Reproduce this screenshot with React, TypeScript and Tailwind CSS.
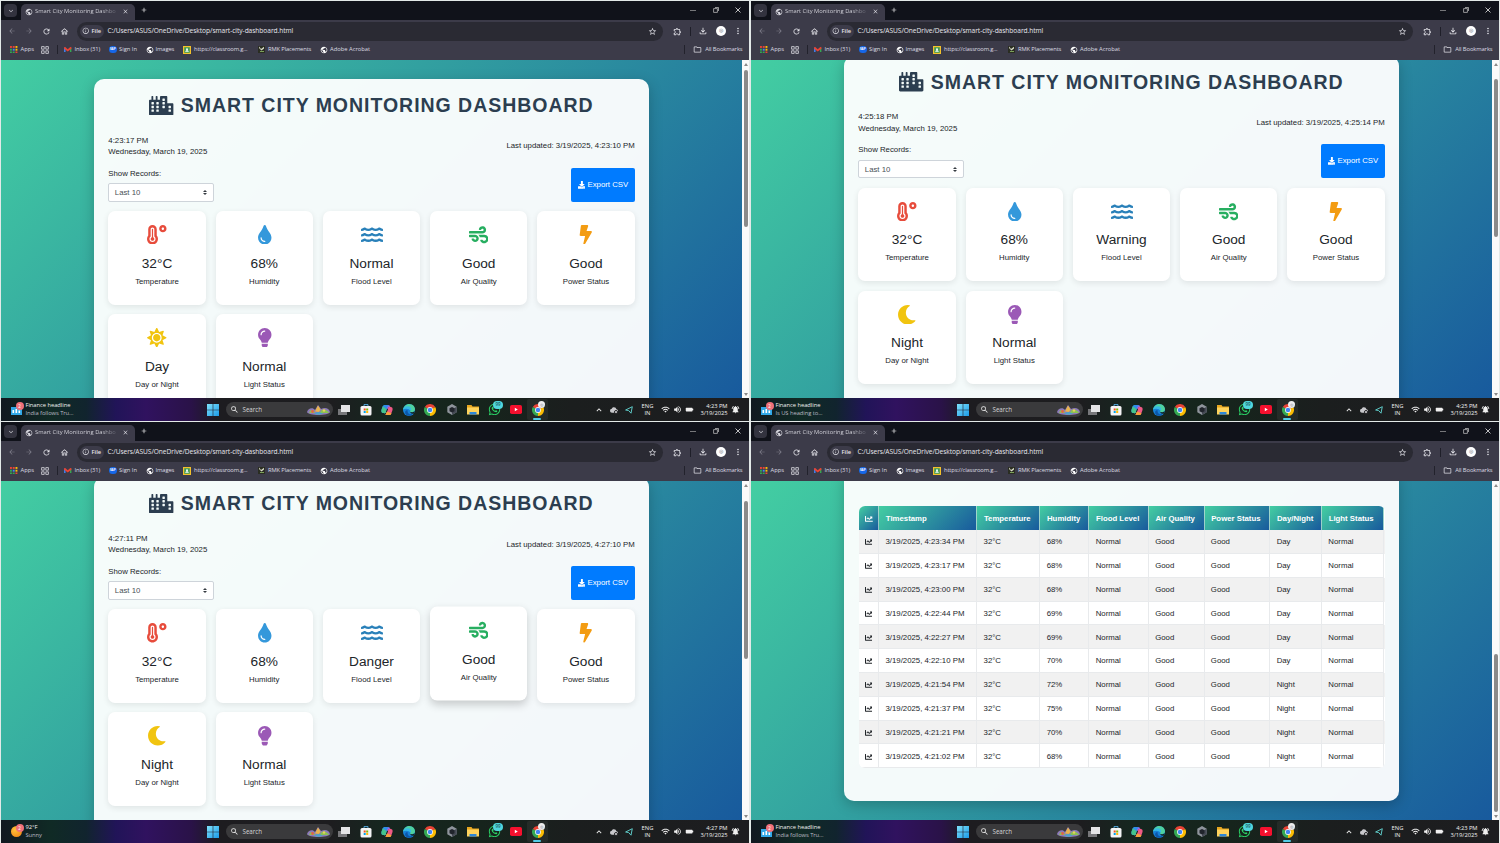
import type { ReactNode } from 'react';
import {
  FaBolt, FaChartLine, FaCity, FaDownload, FaLightbulb, FaMoon, FaSun,
  FaTemperatureHigh, FaTint, FaWater, FaWhatsapp, FaWind,
} from 'react-icons/fa';
import {
  MdArrowBack, MdArrowForward, MdClose, MdExpandMore, MdMoreVert, MdOutlineExtension, MdOutlineFileDownload,
  MdOutlineFolder, MdOutlineHome, MdPublic, MdRefresh, MdSearch, MdStarOutline, MdAdd, MdInfoOutline,
  MdKeyboardArrowUp, MdWifi, MdVolumeUp, MdBatteryFull, MdCloud, MdNotificationsActive,
} from 'react-icons/md';

type City = {
  clock: string;
  updated: string;
  flood: string;
  night: boolean;
  hover?: boolean;
};

const rows = [
  ['4:23:34', '68%', 'Day'],
  ['4:23:17', '68%', 'Day'],
  ['4:23:00', '68%', 'Day'],
  ['4:22:44', '69%', 'Day'],
  ['4:22:27', '69%', 'Day'],
  ['4:22:10', '70%', 'Day'],
  ['4:21:54', '72%', 'Night'],
  ['4:21:37', '75%', 'Night'],
  ['4:21:21', '70%', 'Night'],
  ['4:21:02', '68%', 'Night'],
];

const tableGrid =
  'grid grid-cols-[20.8px_98.1px_63.1px_49px_59.5px_55.7px_65.8px_51.7px_62.3px]';

function Chrome({ className = 'size-3' }: { className?: string }) {
  return (
    <svg viewBox="0 0 24 24" className={className}>
      <path d="M12 12 1.6 6A12 12 0 0 1 22.4 6Z" fill="#ea4335" />
      <path d="M12 12 22.4 6A12 12 0 0 1 12 24Z" fill="#fbbc04" />
      <path d="M12 12v12A12 12 0 0 1 1.6 6Z" fill="#34a853" />
      <circle cx="12" cy="12" r="5.8" fill="#fff" />
      <circle cx="12" cy="12" r="4.5" fill="#4285f4" />
    </svg>
  );
}

function TabBar() {
  return (
    <div className="flex h-[19px] shrink-0 items-end bg-[#10121a] text-[#d5d5dc]">
      <div className="mb-[3px] ml-[3px] flex h-[13px] w-[13px] items-center justify-center rounded-[4px] bg-[#33333f]">
        <MdExpandMore className="size-[8px]" />
      </div>
      <div className="ml-[3.500px] flex h-4 w-[114px] items-center rounded-t-[5px] bg-[#3c3b49] pb-[1px] pl-[4px] pr-[5.500px]">
        <MdPublic className="size-[8px] shrink-0" />
        <span className="ml-[2.500px] whitespace-nowrap bg-[linear-gradient(to_right,#dcdce3_82%,#5a5967)] bg-clip-text text-[5.800px] tracking-[-0.020px] text-transparent">
          Smart City Monitoring Dashbo
        </span>
        <MdClose className="ml-auto size-[7px] shrink-0" />
      </div>
      <MdAdd className="mb-[6px] ml-[5px] size-[8px] text-white" />
      <div className="mb-[7px] ml-auto mr-[8px] flex items-center gap-[16.300px]">
        <svg viewBox="0 0 6 6" className="size-[6px]" fill="none" stroke="#bbb" strokeWidth=".6"><path d="M0 3.5h6" /></svg>
        <svg viewBox="0 0 6 6" className="size-[6px]" fill="none" stroke="#ccc" strokeWidth=".7"><path d="M.6 1.6h3.8v3.8H.6zM2 .5h3.5V4" /></svg>
        <svg viewBox="0 0 6 6" className="size-[6px]" fill="none" stroke="#eee" strokeWidth=".8"><path d="m.5.5 5 5m0-5-5 5" /></svg>
      </div>
    </div>
  );
}

function AddressBar() {
  return (
    <div className="flex h-[22px] shrink-0 items-center bg-[#3c3b49] text-[#e6e6ec]">
      <MdArrowBack className="ml-[7px] size-[8px] text-[#7c7b88]" />
      <MdArrowForward className="ml-[9px] size-[8px] text-[#7c7b88]" />
      <MdRefresh className="ml-[9px] size-[9px]" />
      <MdOutlineHome className="ml-[8.500px] size-[9px]" />
      <div className="ml-[8.500px] flex h-[19px] w-[586px] items-center rounded-full bg-[#2a2a33] pl-[3px] pr-[6px]">
        <div className="flex h-[13px] w-[24px] items-center rounded-full bg-[#3c3b49] pl-[2px] text-[5.800px] font-semibold">
          <MdInfoOutline className="mr-[2px] size-[7.500px]" />
          File
        </div>
        <span className="ml-[3.500px] text-[6.600px] tracking-[-0.040px] text-[#e8e8ee]">C:/Users/ASUS/OneDrive/Desktop/smart-city-dashboard.html</span>
        <MdStarOutline className="ml-auto size-[9px]" />
      </div>
      <MdOutlineExtension className="ml-[10px] size-[9px]" />
      <span className="ml-[8px] h-[9px] w-px bg-[#1f1f29]" />
      <MdOutlineFileDownload className="ml-[7px] size-[10px]" />
      <span className="ml-[7.500px] flex size-[10px] items-center justify-center rounded-full bg-white text-[5px] text-gray-500">◎</span>
      <MdMoreVert className="ml-[7.500px] size-[10px]" />
    </div>
  );
}

function Bookmark({ className, icon, children }: { className: string; icon: ReactNode; children?: ReactNode }) {
  return (
    <div className={`flex shrink-0 items-center whitespace-nowrap ${className}`}>
      {icon}
      {children}
    </div>
  );
}

const squares = [0, 1, 2, 3, 4, 5, 6, 7, 8];
const squareColors = ['#ea4335', '#ea4335', '#fbbc04', '#34a853', '#4285f4', '#fbbc04', '#34a853', '#34a853', '#ea4335'];

function Bookmarks() {
  return (
    <div className="flex h-[18px] shrink-0 items-center bg-[#3c3b49] pb-[3px] pl-[9px] text-[5.800px] text-[#dcdce3]">
      <Bookmark
        className="w-[31px] gap-[3px]"
        icon={
          <svg viewBox="0 0 9 9" className="size-[7.500px]">
            {squares.map((i) => (
              <rect key={i} x={(i % 3) * 3.3} y={Math.floor(i / 3) * 3.3} width="2.3" height="2.3" fill={squareColors[i]} />
            ))}
          </svg>
        }
      >
        Apps
      </Bookmark>
      <Bookmark
        className="w-[15.500px]"
        icon={
          <svg viewBox="0 0 8 8" className="size-[8px]" fill="none" stroke="#c8c8d0" strokeWidth=".9">
            <path d="M.6.6h2.6v2.6H.6zM4.8.6h2.6v2.6H4.8zM.6 4.8h2.6v2.6H.6zM4.800 4.800h2.600v2.600H4.800z" />
          </svg>
        }
      />
      <Bookmark className="w-[7.500px]" icon={<span className="h-[9px] w-px bg-[#22222c]" />} />
      <Bookmark
        className="w-[45px] gap-[3px]"
        icon={
          <svg viewBox="0 0 8 6" className="h-[5.500px] w-[7.500px]">
            <path d="M0 6V.8h1.6V6z" fill="#4285f4" />
            <path d="M6.4 6V.8H8V6z" fill="#34a853" />
            <path d="M0 .4 1.2 0 4 2.4 6.8 0 8 .4V2L4 5 0 2z" fill="#ea4335" />
          </svg>
        }
      >
        <span className="tracking-[-0.130px]">Inbox (31)</span>
      </Bookmark>
      <Bookmark
        className="w-[36.500px] gap-[2.500px]"
        icon={<span className="flex h-[7.500px] w-[7.500px] items-center justify-center rounded-full bg-[#1667e8] text-[3px] font-bold text-white">SAP</span>}
      >
        Sign In
      </Bookmark>
      <Bookmark className="w-[37px] gap-[2px]" icon={<MdPublic className="size-[8px] text-white" />}>
        <span className="tracking-[-0.100px]">Images</span>
      </Bookmark>
      <Bookmark
        className="w-[75.500px] gap-[3.500px]"
        icon={
          <svg viewBox="0 0 8 8" className="size-[8px]">
            <path d="M0 0h8v8H0z" fill="#f4c22b" />
            <path d="M1.200 1.200h5.600v5.600H1.200z" fill="#3f9b55" />
            <circle cx="4" cy="3.2" r="1" fill="#fff" />
            <path d="M2.2 5.8c0-2 3.6-2 3.6 0z" fill="#fff" />
          </svg>
        }
      >
        <span className="tracking-[-0.150px]">https://classroom.g...</span>
      </Bookmark>
      <Bookmark
        className="w-[62px] gap-[3px]"
        icon={
          <svg viewBox="0 0 7 7" className="size-[7px]">
            <path d="M0 0h7v7H0z" fill="#2a2d22" />
            <path d="M1 .5 3 3 6 .8v1.6L3.5 4.5 1 2z" fill="#d9dcc8" />
            <path d="M2 5h4v1H2z" fill="#7ca05a" />
          </svg>
        }
      >
        <span className="tracking-[-0.130px]">RMK Placements</span>
      </Bookmark>
      <Bookmark className="w-[60px] gap-[2px]" icon={<MdPublic className="size-[8px] text-white" />}>Adobe Acrobat</Bookmark>
      <div className="ml-auto mr-[6.500px] flex items-center">
        <span className="mr-[8px] h-[9px] w-px bg-[#22222c]" />
        <MdOutlineFolder className="mr-[3px] size-[9px]" />
        <span className="tracking-[-0.100px]">All Bookmarks</span>
      </div>
    </div>
  );
}

function Taskbar({ lines, time, sunny }: { lines: [string, string]; time: string; sunny?: boolean }) {
  return (
    <div className="flex h-[23px] shrink-0 items-center bg-[linear-gradient(to_right,#111820_0px,#102a25_50px,#11242e_85px,#211458_115px,#30125f_145px,#2a1248_190px,#1d1c20_216px,#1d1d1f_330px,#16261f_380px,#16241c_480px,#1b1e1e_570px,#1d1d20_748px)] text-[5.800px] leading-[7px] text-[#f0f0f0]">
      <div className="relative ml-[9.500px] size-[11px]">
        {sunny ? (
          <span className="block size-[11px] rounded-full bg-[radial-gradient(circle_at_35%_35%,#ffc03a,#ef7d10)]" />
        ) : (
          <svg viewBox="0 0 11 11" className="size-[11px]">
            <path d="M0 3h11v8H0z" fill="#31a8e8" />
            <path d="M1.500 9V6h1.600v3zM4.500 9V5h1.600v4zM7.500 9V6.500h1.600V9z" fill="#fff" />
          </svg>
        )}
        <span className="absolute -top-[2px] left-[5px] flex size-[8px] items-center justify-center rounded-full bg-[#f0707a] text-[4.500px] text-white">2</span>
      </div>
      <div className="ml-[4px] w-[170px] pt-[1px] leading-[7.600px]">
        <div className="tracking-[-0.050px]">{lines[0]}</div>
        <div className="tracking-[-0.060px] text-[#b9b9c2]">{lines[1]}</div>
      </div>
      <svg viewBox="0 0 12 12" className="ml-[11px] size-[12px]">
        <defs>
          <linearGradient id="win" x1="0" y1="0" x2="12" y2="12" gradientUnits="userSpaceOnUse">
            <stop stopColor="#7fe0fb" />
            <stop offset="1" stopColor="#1b9be8" />
          </linearGradient>
        </defs>
        <path d="M0 0h5.700v5.700H0zM6.300 0H12v5.700H6.300zM0 6.300h5.700V12H0zM6.300 6.300H12V12H6.300z" fill="url(#win)" />
      </svg>
      <div className="ml-[7px] flex h-[15.500px] w-[107px] items-center rounded-full bg-[#3a3a3c] pl-[4px] pr-[3px]">
        <MdSearch className="size-[9px]" />
        <span className="ml-[4px] text-[6.200px] text-[#d5d5d5]">Search</span>
        <svg viewBox="0 0 23 12" className="ml-auto h-[12px] w-[23px]">
          <path d="M0 8C1 4 6 3 8 6l3-5 3 4c4-2 8-1 9 3-1 4-22 4-23 0z" fill="#8d7bb8" />
          <path d="M2 9c1-4 5-4 6 0zM13 9c1-5 7-4 9 0z" fill="#8cc152" />
          <path d="M8 7.500 11 1.500l2.500 4L12 8z" fill="#e9b44c" />
          <circle cx="5.500" cy="7.500" r="1.400" fill="#e0604a" />
          <circle cx="17" cy="6.500" r="1.300" fill="#e8d05a" />
          <path d="M7 9.500c3-2 6-2 9 0-3 1.500-6 1.500-9 0z" fill="#4aa3c7" />
        </svg>
      </div>
      <div className="ml-[0.800px] flex items-center">
        <div className="flex w-[21.500px] justify-center">
          <svg viewBox="0 0 12 10" className="h-[10px] w-[12px]">
            <path d="M0 4h9v6H0z" fill="#77777a" />
            <path d="M3 0h9v7H3z" fill="#e4e4e6" />
          </svg>
        </div>
        <div className="flex w-[21.500px] justify-center">
          <svg viewBox="0 0 12 12" className="size-[12px]">
            <path d="M4 2.500V.6h4v1.900" fill="none" stroke="#5ab5ee" strokeWidth=".9" />
            <rect x=".5" y="2" width="11" height="9.500" rx="1.500" fill="#f4f4f6" />
            <path d="M3.700 4.500h2v2h-2z" fill="#f25022" />
            <path d="M6.200 4.500h2v2h-2z" fill="#7fba00" />
            <path d="M3.700 7h2v2h-2z" fill="#00a4ef" />
            <path d="M6.200 7h2v2h-2z" fill="#ffb900" />
          </svg>
        </div>
        <div className="flex w-[21.500px] justify-center">
          <svg viewBox="0 0 12 12" className="size-[12px]">
            <path d="M3.500 1h4L5 8.200C4.600 9.300 3.500 9.300 2 9 0 8.500.2 6.800.7 5.200L1.800 2.200C2.200 1.300 2.800 1 3.500 1z" fill="#2f8fe8" />
            <path d="M.7 5.200 1.800 2.200 5.900 5.500 5 8.200C4.600 9.300 3.500 9.300 2 9 0 8.500.2 6.800.7 5.200z" fill="#45c58c" />
            <path d="M8.500 11h-4L7 3.800C7.400 2.700 8.500 2.700 10 3c2 .5 1.800 2.200 1.300 3.800l-1.100 3c-.4.900-1 1.200-1.700 1.200z" fill="#ef5a86" />
            <path d="M8.500 11h-4l1.300-3.800 4.700 2c-.5 1.300-1.200 1.800-2 1.800z" fill="#f6a13c" />
            <path d="M7.500 1C8.500 1 8.700 2 9 2.900 7.800 2.800 7.300 3 7 3.800L6.400 5.500 5.500 4z" fill="#8a6cf0" />
            <path d="M6.600 4.900 5.400 8.200" stroke="#16261f" strokeWidth="1" />
          </svg>
        </div>
        <div className="flex w-[21.500px] justify-center">
          <svg viewBox="0 0 12 12" className="size-[12px]">
            <circle cx="6" cy="6" r="6" fill="#1681d8" />
            <path d="M.1 5.500C1 1.500 4 0 6.300 0 10 0 12 3 12 5.200c0 2-1.500 3-3.300 3-1.700 0-2-.6-1.500-1.300C8.200 5 6.500 3.700 4.700 3.700 2.500 3.700.8 4.600.1 5.500z" fill="#4fd1a0" />
            <path d="M.1 5.500C.9 3 3.500 1.800 6 2.500 8.300 3.200 8.800 5.500 7.300 6.800 6.500 5 3 4 .1 5.500z" fill="#35b9e6" />
            <path d="M7.300 6.800c-.5.700-.2 1.400 1.400 1.400 1.300 0 2.300-.4 2.900-1.300L11 9.600c-3 .8-4.200-1-3.700-2.800z" fill="#16261f" />
            <path d="M4.600 6C4 8.500 6 11 9.500 10.200 7.500 12.500 3.500 12 2.300 9.400 1.600 7.600 2.800 6.300 4.600 6z" fill="#0d57a8" />
          </svg>
        </div>
        <div className="flex w-[21.500px] justify-center"><Chrome /></div>
        <div className="flex w-[21.500px] justify-center">
          <svg viewBox="0 0 10 11" className="h-[11px] w-[10px]">
            <path d="M5 0 9.700 2.800v5.400L5 11 .3 8.200V2.800z" fill="#8f949c" />
            <path d="M5 5.500 9.700 2.800v5.400L5 11z" fill="#454a54" />
            <path d="M5 3 7.500 4.300v2.900L5 8.500 2.500 7.200V4.300z" fill="#20242b" />
          </svg>
        </div>
        <div className="flex w-[21.500px] justify-center">
          <svg viewBox="0 0 12 11" className="h-[11px] w-[12px]">
            <path d="M0 1h4.500l1 1.400H12V10H0z" fill="#e8a61e" />
            <path d="M0 3.500h12V10.500H0z" fill="#ffd35c" />
            <path d="M2.500 8h7v2.500h-7z" fill="#2f87d6" />
          </svg>
        </div>
        <div className="relative flex w-[21.500px] justify-center">
          <FaWhatsapp className="size-[13px] text-[#2bd467]" />
          <span className="absolute -top-[2px] left-[9.500px] flex h-[7.500px] w-[9.500px] items-center justify-center rounded-full bg-[#4fd6dd] text-[4.500px] text-[#113333]">99</span>
        </div>
        <div className="flex w-[21.500px] justify-center">
          <svg viewBox="0 0 12 9" className="h-[9px] w-[12px]">
            <rect width="12" height="9" rx="1.800" fill="#f5102e" />
            <path d="m4.800 2.700 3 1.800-3 1.800z" fill="#fff" />
          </svg>
        </div>
        <div className="relative flex h-[21px] w-[21.500px] items-center justify-center rounded-[2px] bg-white/5">
          <Chrome />
          <span className="absolute left-[11px] top-[2px] flex size-[7px] items-center justify-center rounded-full bg-[#eeeeee] text-[4px] text-gray-500">◎</span>
          <span className="absolute bottom-0 left-[6.500px] h-[2px] w-[8px] rounded-full bg-[#52cbe6]" />
        </div>
      </div>
      <div className="ml-auto flex items-center">
        <MdKeyboardArrowUp className="size-[10px]" />
        <div className="relative ml-[6px]">
          <MdCloud className="size-[8px] text-[#c8c8cc]" />
          <span className="absolute bottom-0 right-0 size-[4px] rounded-full border border-[#1d1d20] bg-[#e8e8ea]" />
        </div>
        <svg viewBox="0 0 8 8" className="ml-[7px] size-[8px]" fill="none" stroke="#5ec9c6" strokeWidth="1">
          <path d="M.6 4 7.300.7 6 7.200 3.700 4.600z" />
        </svg>
        <div className="ml-[6.500px] w-[17px] text-center">
          <div>ENG</div>
          <div>IN</div>
        </div>
        <MdWifi className="ml-[5px] size-[9px]" />
        <MdVolumeUp className="ml-[3px] size-[9px]" />
        <MdBatteryFull className="ml-[2.500px] size-[9px] rotate-90" />
        <div className="ml-[4px] w-[30px] whitespace-nowrap text-right tracking-[-0.050px]">
          <div>{time}</div>
          <div>3/19/2025</div>
        </div>
        <MdNotificationsActive className="ml-[3.500px] mr-[9px] size-[9px]" />
      </div>
    </div>
  );
}

function Window({ children, thumb, taskbar }: { children: ReactNode; thumb: string; taskbar: ReactNode }) {
  return (
    <section className="flex h-full flex-col overflow-hidden">
      <div className="flex flex-col font-['Open_Sans','Noto_Sans',sans-serif]">
        <TabBar />
        <AddressBar />
        <Bookmarks />
      </div>
      <div className="flex min-h-0 flex-1">
        <div className="min-w-0 flex-1 overflow-hidden bg-[linear-gradient(135deg,#43cea2,#185a9d)] pl-[93px]">{children}</div>
        <div className="flex w-[7px] shrink-0 flex-col items-center bg-[#fafafa]">
          <span className="mt-[2.500px] border-x-[2px] border-b-[3px] border-x-transparent border-b-[#8a8a8a]" />
          <span className={`w-[4px] rounded-full bg-[#8a8a8a] ${thumb}`} />
          <span className="mb-[2px] mt-auto border-x-[2px] border-t-[3px] border-x-transparent border-t-[#8a8a8a]" />
        </div>
      </div>
      <div className="font-['Open_Sans','Noto_Sans',sans-serif]">{taskbar}</div>
    </section>
  );
}

function StatCard({ icon, value, label, raised }: { icon: ReactNode; value: string; label: string; raised?: boolean }) {
  return (
    <div
      className={`flex h-[93.300px] flex-col items-center rounded-[7px] bg-white pt-[13.700px] ${
        raised ? '-translate-y-[2.400px] shadow-[0_4px_8px_rgba(0,0,0,0.18)]' : 'shadow-[0_2px_6px_rgba(0,0,0,0.09)]'
      }`}
    >
      <div className="text-[19.530px]">{icon}</div>
      <h3 className="mt-[11.300px] text-[13.670px] leading-[16.400px]">{value}</h3>
      <p className="mt-[3.600px] leading-[11.720px]">{label}</p>
    </div>
  );
}

function Dashboard({ clock, updated, flood, night, hover, offset }: City & { offset: string }) {
  return (
    <div className={`h-[600px] w-[555px] rounded-[10px] bg-white/95 px-[14.300px] pt-[14.650px] text-[7.810px] leading-[11.720px] text-[#212529] shadow-[0_4px_14px_rgba(0,0,0,0.22)] ${offset}`}>
      <h1 className="flex h-[23.400px] items-center justify-center whitespace-nowrap text-[19.530px] font-bold tracking-[0.960px] text-[#2c3e50]">
        <FaCity className="mr-[7px] h-[19.500px] w-[24.400px]" />
        <span className="pt-[1.600px]">SMART CITY MONITORING DASHBOARD</span>
      </h1>
      <div className="mt-[17.500px] flex items-center justify-between">
        <div>
          <div>{clock}</div>
          <div>Wednesday, March 19, 2025</div>
        </div>
        <div>Last updated: {updated}</div>
      </div>
      <div className="mt-[9.800px] flex justify-between">
        <div>
          <div>Show Records:</div>
          <div className="mt-[3.500px] flex h-[18.550px] w-[105.500px] items-center justify-between rounded-[2px] border-[0.500px] border-[#ced4da] bg-white pl-[5.500px] pr-[5.500px] pt-[1px] text-[#495057]">
            Last 10
            <svg viewBox="0 0 4 5" className="h-[5px] w-[4px]"><path d="M0 2 2 0l2 2zM0 3h4L2 5z" fill="#343a40" /></svg>
          </div>
        </div>
        <button className="flex w-[63.500px] items-center justify-center rounded-[2px] bg-[#007bff] text-white">
          <FaDownload className="mr-[2px] size-[7.810px]" />
          Export CSV
        </button>
      </div>
      <div className="mt-[9.700px] grid grid-cols-5 gap-[9.770px]">
        <StatCard icon={<FaTemperatureHigh className="text-[#e74c3c]" />} value="32°C" label="Temperature" />
        <StatCard icon={<FaTint className="text-[#3498db]" />} value="68%" label="Humidity" />
        <StatCard icon={<FaWater className="h-[19.500px] w-[24px] text-[#2980b9]" />} value={flood} label="Flood Level" />
        <StatCard icon={<FaWind className="text-[#27ae60]" />} value="Good" label="Air Quality" raised={hover} />
        <StatCard icon={<FaBolt className="text-[#f39c12]" />} value="Good" label="Power Status" />
        <StatCard
          icon={night ? <FaMoon className="text-[#f1c40f]" /> : <FaSun className="text-[#f1c40f]" />}
          value={night ? 'Night' : 'Day'}
          label="Day or Night"
        />
        <StatCard icon={<FaLightbulb className="text-[#9b59b6]" />} value="Normal" label="Light Status" />
      </div>
    </div>
  );
}

const headCell = 'flex items-center border-r-[0.500px] border-[#dee2e6]/60 bg-[linear-gradient(135deg,#43cea2,#185a9d)] pl-[6.500px] pt-[1px]';
const bodyCell = 'flex items-center border-b border-r border-[#e8eaec] pl-[6.200px] pt-[1.500px]';

function Records() {
  return (
    <div className="-mt-[10px] h-[329.500px] w-[555px] rounded-[10px] bg-white/95 px-[14.500px] pt-[35px] text-[7.810px] text-[#212529] shadow-[0_4px_14px_rgba(0,0,0,0.22)]">
      <div className="overflow-hidden rounded-[6px] bg-white">
        <div className={`${tableGrid} h-[24.200px] whitespace-nowrap font-bold text-white`}>
          <div className={headCell}><FaChartLine className="size-[7.810px]" /></div>
          {['Timestamp', 'Temperature', 'Humidity', 'Flood Level', 'Air Quality', 'Power Status', 'Day/Night', 'Light Status'].map((h) => (
            <div key={h} className={headCell}>{h}</div>
          ))}
        </div>
        {rows.map(([time, humidity, phase]) => (
          <div key={time} className={`${tableGrid} h-[23.800px] whitespace-nowrap odd:bg-white even:bg-[#f1f1f1]`}>
            <div className={bodyCell}><FaChartLine className="size-[7.810px]" /></div>
            {[`3/19/2025, ${time} PM`, '32°C', humidity, 'Normal', 'Good', 'Good', phase, 'Normal'].map((v, i) => (
              <div key={i} className={bodyCell}>{v}</div>
            ))}
          </div>
        ))}
      </div>
    </div>
  );
}

export default function App() {
  return (
    <main className="grid h-[843px] w-[1500px] grid-cols-[748px_748px] grid-rows-[420px_421px] gap-x-[2px] gap-y-[1px] overflow-hidden bg-[#e3e9e8] pl-px pt-px font-['Liberation_Sans',Arial,sans-serif]">
      <Window thumb="mt-[4px] h-[157px]" taskbar={<Taskbar lines={['Finance headline', 'India follows Tru...']} time="4:23 PM" />}>
        <Dashboard offset="mt-[19px]" clock="4:23:17 PM" updated="3/19/2025, 4:23:10 PM" flood="Normal" night={false} />
      </Window>
      <Window thumb="mt-[13.500px] h-[158px]" taskbar={<Taskbar lines={['Finance headline', 'Is US heading to...']} time="4:25 PM" />}>
        <Dashboard offset="-mt-[4.300px]" clock="4:25:18 PM" updated="3/19/2025, 4:25:14 PM" flood="Warning" night />
      </Window>
      <Window thumb="mt-[14.500px] h-[158px]" taskbar={<Taskbar lines={['92°F', 'Sunny']} time="4:27 PM" sunny />}>
        <Dashboard offset="-mt-[3.800px]" clock="4:27:11 PM" updated="3/19/2025, 4:27:10 PM" flood="Danger" night hover />
      </Window>
      <Window thumb="mt-[167px] h-[158px]" taskbar={<Taskbar lines={['Finance headline', 'India follows Tru...']} time="4:23 PM" />}>
        <Records />
      </Window>
    </main>
  );
}
